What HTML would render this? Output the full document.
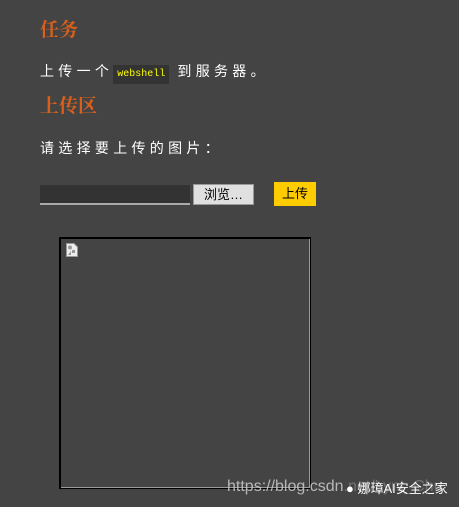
<!DOCTYPE html>
<html><head><meta charset="utf-8"><style>
body{margin:0;width:459px;height:507px;background:#444;overflow:hidden;position:relative;font-family:"Liberation Sans","Noto Sans CJK SC",sans-serif;color:#fff}
.a{position:absolute}
h{position:absolute;color:#d9601a;font-family:"Liberation Serif","Noto Serif CJK SC",serif;font-size:19px;font-weight:bold;line-height:1}
.t{font-size:14px;letter-spacing:4.3px;line-height:1}
code{background:#333;color:#ff0;font-family:"Liberation Mono",monospace;font-size:10px;padding:4px 4px;letter-spacing:0}
</style></head><body>
<h style="left:40px;top:21px">任务</h>
<div class="a t" style="left:40px;top:64px">上传一个<code>webshell</code> 到服务器。</div>
<h style="left:40px;top:97px">上传区</h>
<div class="a t" style="left:40px;top:141px">请选择要上传的图片：</div>
<div class="a" style="left:40px;top:185px;width:150px;height:18px;background:#333;border-bottom:2px solid #aaa"></div>
<div class="a" style="left:193px;top:184px;width:59px;height:19px;background:#e0e0e0;border:1px solid #999;color:#000;font-size:13px;line-height:19px;text-align:center">浏览…</div>
<div class="a" style="left:274px;top:182px;width:42px;height:24px;background:#fc0;color:#000;font-size:13px;line-height:24px;text-align:center">上传</div>
<div class="a" style="left:59px;top:237px;width:249px;height:249px;border:2px solid #000;border-right:1px solid #000;border-bottom:1px solid #000;box-shadow:inset -1px -1px 0 #999"></div>
<svg class="a" style="left:66px;top:243px" width="12" height="14"><path d="M0.5 0.5H8L11.5 4V13.5H0.5Z" fill="#eee" stroke="#999"/><circle cx="4" cy="4.5" r="2" fill="#999"/><rect x="6" y="7" width="3" height="3" fill="#999"/><path d="M2 12L5 8V12Z" fill="#999"/></svg>
<div class="a" style="left:227px;top:478px;font-size:16px;color:#ccc;opacity:.85">https://blog.csdn.net/Lynt_Chu</div>
<div class="a" style="left:345px;top:476px;width:104px;height:20px;background:rgba(68,68,68,.6)"></div>
<div class="a" style="left:346px;top:478px;font-size:13px;color:#fff">● 娜璋AI安全之家</div>
</body></html>
